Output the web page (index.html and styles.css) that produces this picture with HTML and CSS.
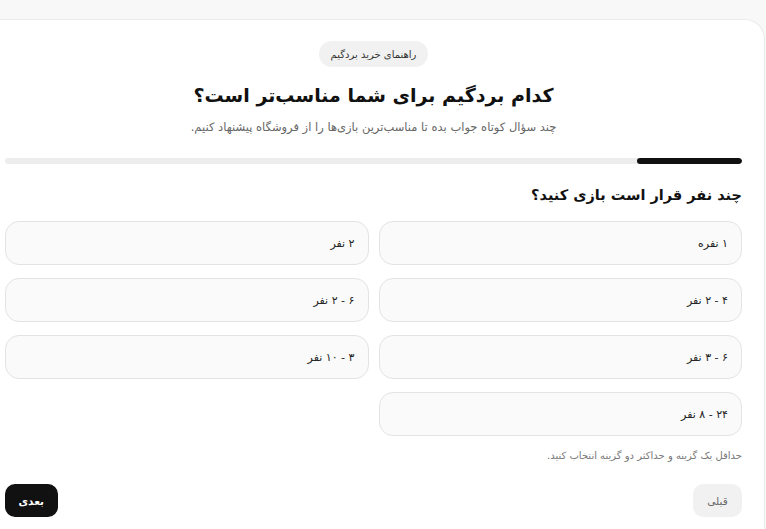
FILE: index.html
```html
<!DOCTYPE html>
<html lang="fa" dir="rtl">
<head>
<meta charset="utf-8">
<title>راهنمای خرید بردگیم</title>
<link rel="stylesheet" href="styles.css">
</head>
<body>
<div class="page">
  <main class="card">
    <header class="intro">
      <span class="badge">راهنمای خرید بردگیم</span>
      <h1 class="title">کدام بردگیم برای شما مناسب‌تر است؟</h1>
      <p class="subtitle">چند سؤال کوتاه جواب بده تا مناسب‌ترین بازی‌ها را از فروشگاه پیشنهاد کنیم.</p>
    </header>
    <div class="progress"><div class="progress-fill" style="width:14.3%"></div></div>
    <h2 class="question">چند نفر قرار است بازی کنید؟</h2>
    <div class="options">
      <button class="option">۱ نفره</button>
      <button class="option">۲ نفر</button>
      <button class="option">۴ - ۲ نفر</button>
      <button class="option">۶ - ۲ نفر</button>
      <button class="option">۶ - ۳ نفر</button>
      <button class="option">۳ - ۱۰ نفر</button>
      <button class="option">۲۴ - ۸ نفر</button>
    </div>
    <p class="hint">حداقل یک گزینه و حداکثر دو گزینه انتخاب کنید.</p>
    <div class="actions">
      <button class="btn btn-prev">قبلی</button>
      <button class="btn btn-next">بعدی</button>
    </div>
  </main>
</div>
</body>
</html>
```
FILE: styles.css
```css
* { box-sizing: border-box; }
html, body { margin: 0; padding: 0; }
body {
  background: #f8f8f8;
  font-family: "DejaVu Sans", "Noto Sans", sans-serif;
  color: #111;
  overflow: hidden;
}
.page {
  padding: 19px 1px 0 0;
  height: 529px;
  overflow: hidden;
}
.card {
  width: 783px;
  min-height: 520px;
  background: #fff;
  border: 1px solid #ebebeb;
  border-bottom: none;
  border-radius: 20px 20px 0 0;
  padding: 21px 22px 12px 22px;
}
.intro {
  display: flex;
  flex-direction: column;
  align-items: center;
}
.badge {
  display: inline-flex;
  align-items: center;
  height: 26px;
  padding: 0 12px;
  border-radius: 13px;
  background: #f1f1f1;
  color: #333;
  font-size: 10px;
}
.title {
  margin: 13px 0 0;
  font-size: 19px;
  line-height: 30px;
  font-weight: 700;
  color: #111;
}
.subtitle {
  margin: 7px 0 0;
  font-size: 11.5px;
  line-height: 20px;
  color: #666;
}
.progress {
  margin-top: 21px;
  height: 6px;
  border-radius: 3px;
  background: #ededed;
  overflow: hidden;
}
.progress-fill {
  height: 100%;
  background: #111;
  border-radius: 3px;
}
.question {
  margin: 18px 0 0;
  font-size: 14.5px;
  line-height: 26px;
  font-weight: 700;
  color: #111;
}
.options {
  margin-top: 13px;
  display: grid;
  grid-template-columns: 1fr 1fr;
  column-gap: 10px;
  row-gap: 13px;
}
.option {
  height: 44px;
  border: 1px solid #e3e3e3;
  border-radius: 14px;
  background: #fafafa;
  font-family: inherit;
  font-size: 11px;
  color: #222;
  text-align: right;
  padding: 0 13px;
  direction: rtl;
}
.hint {
  margin: 12px 0 0;
  font-size: 10px;
  line-height: 16px;
  color: #777;
}
.actions {
  margin-top: 20px;
  display: flex;
  justify-content: space-between;
}
.btn {
  height: 33px;
  border: none;
  border-radius: 10px;
  font-family: inherit;
  font-size: 10.5px;
  padding: 0 14px;
}
.btn-prev {
  background: #f1f1f1;
  color: #666;
  width: 49px;
}
.btn-next {
  background: #111;
  color: #fff;
  font-weight: 700;
  width: 53px;
}
```
